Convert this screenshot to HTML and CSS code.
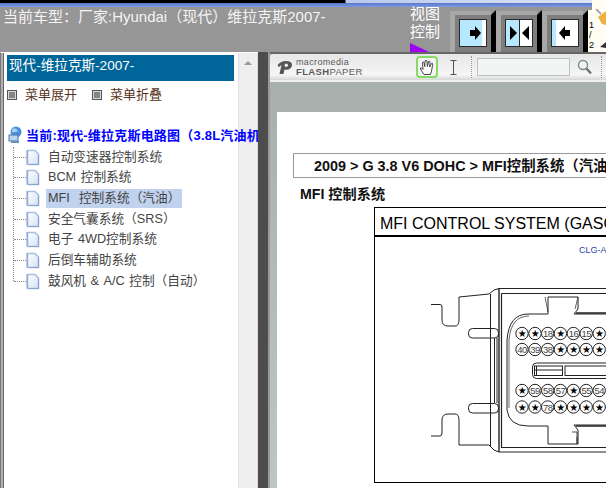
FILE: index.html
```html
<!DOCTYPE html>
<html>
    <head lang="zh">
        <meta name="viewport" content="width=device-width, initial-scale=1" />
        <title>维修手册</title>
        <link rel="stylesheet" href="styles.css">
    </head>
    <body>
        <svg class="defs" width="0" height="0">
            <defs>
                <linearGradient id="docfill" x1="0" y1="0" x2="1" y2="1">
                    <stop offset="0" stop-color="#ffffff"/>
                    <stop offset="1" stop-color="#d4e2f6"/>
                </linearGradient>
            </defs>
            <symbol id="doc" viewBox="0 0 14 17">
                <path d="M1.5 1.5 H9 L12.5 5 V15.5 H1.5 Z" fill="url(#docfill)" stroke="#a8bee4" stroke-width="1.6" stroke-linejoin="round"/>
                <path d="M1 1 V15.5" stroke="#7d96c4" stroke-width="0.8"/>
                <path d="M3 15.5 H12.5 V6" fill="none" stroke="#8aa2cc" stroke-width="1"/>
            </symbol>
            <symbol id="square" viewBox="0 0 10 10">
                <rect x="0.5" y="0.5" width="9" height="9" fill="#d8d8d8" stroke="#555"/>
                <path d="M2 3 H8 M2 5 H8 M2 7 H8" stroke="#333"/>
            </symbol>
        </svg>

        <header class="top">
            <div class="strip"></div>
            <div class="blue-strip"></div>
            <div class="top-row">
                <div class="car-title">当前车型：厂家:Hyundai（现代）维拉克斯2007-</div>
                <div class="view-label">
                    视图<br>控制
                    <span class="view-mark"></span>
                </div>
                <div class="view-buttons">
                    <svg class="view-btn" width="46" height="42" viewBox="0 0 46 42">
                        <rect x="0" y="1" width="41" height="41" fill="#a8a8a8"/>
                        <rect x="5" y="5" width="36" height="37" fill="#7e7e7e"/>
                        <polygon points="41,5 46,0 46,42 41,42" fill="#000"/>
                        <rect x="9.5" y="9.5" width="27" height="27" fill="#b8e8ff" stroke="#2a2a2a"/>
                        <rect x="32" y="10" width="4" height="26" fill="#fff"/>
                        <polygon points="20,20 25,20 25,16 31,23 25,30 25,26 20,26" fill="#000"/>
                    </svg>
                    <svg class="view-btn" width="46" height="42" viewBox="0 0 46 42">
                        <rect x="0" y="1" width="41" height="41" fill="#a8a8a8"/>
                        <rect x="5" y="5" width="36" height="37" fill="#7e7e7e"/>
                        <polygon points="41,5 46,0 46,42 41,42" fill="#000"/>
                        <rect x="9.5" y="9.5" width="27" height="27" fill="#fff" stroke="#2a2a2a"/>
                        <rect x="10" y="10" width="13" height="26" fill="#b8e8ff"/>
                        <path d="M23.5 10 V36" stroke="#2a2a2a"/>
                        <polygon points="14,16 21,23 14,30" fill="#000"/>
                        <polygon points="33,16 26,23 33,30" fill="#000"/>
                    </svg>
                    <svg class="view-btn" width="50" height="42" viewBox="0 0 50 42">
                        <rect x="0" y="1" width="41" height="41" fill="#a8a8a8"/>
                        <rect x="5" y="5" width="36" height="37" fill="#7e7e7e"/>
                        <polygon points="41,5 46,0 46,42 41,42" fill="#000"/>
                        <rect x="46" y="0" width="4" height="42" fill="#fffdf0"/>
                        <rect x="9.5" y="9.5" width="27" height="27" fill="#fff" stroke="#2a2a2a"/>
                        <rect x="10" y="10" width="4" height="26" fill="#b8e8ff"/>
                        <polygon points="28,20 23,20 23,16 17,23 23,30 23,26 28,26" fill="#000"/>
                    </svg>
                </div>
            </div>
            <div class="corner">
                <span class="corner-num">1<br>/<br>2</span>
                <svg width="14" height="42" viewBox="0 0 14 42">
                    <polygon points="6,8 14,2 14,16 10,15" fill="#f0b040"/>
                    <path d="M4 0 L9 5" stroke="#a8a8a8" stroke-width="2"/>
                    <polygon points="8,38 14,33 14,39" fill="#333"/>
                </svg>
            </div>
        </header>

        <main class="main">
            <section class="side">
                <div class="side-content">
                    <div class="side-title">现代-维拉克斯-2007-</div>
                    <div class="menu-actions">
                        <span class="menu-action"><svg width="10" height="10"><use href="#square"/></svg>菜单展开</span>
                        <span class="menu-action"><svg width="10" height="10"><use href="#square"/></svg>菜单折叠</span>
                    </div>
                    <div class="tree-root">
                        <svg width="14" height="18" viewBox="0 0 14 18">
                            <circle cx="8" cy="6" r="5.5" fill="#4a90d8"/>
                            <path d="M4 3 Q8 1 10 5 Q7 7 4 6 Z" fill="#9fd0f4"/>
                            <rect x="1" y="9" width="9" height="6" fill="#bcd4ec" stroke="#4878b0"/>
                            <rect x="3" y="15" width="8" height="2" fill="#6a90b8"/>
                        </svg>
                        <span>当前:现代-维拉克斯电路图（3.8L汽油机</span>
                    </div>
                    <ul class="tree">
                        <li class="tree-item"><svg width="14" height="17"><use href="#doc"/></svg><span class="tree-text">自动变速器控制系统</span></li>
                        <li class="tree-item"><svg width="14" height="17"><use href="#doc"/></svg><span class="tree-text">BCM 控制系统</span></li>
                        <li class="tree-item"><svg width="14" height="17"><use href="#doc"/></svg><span class="tree-text selected">MFI&nbsp; 控制系统（汽油）</span></li>
                        <li class="tree-item"><svg width="14" height="17"><use href="#doc"/></svg><span class="tree-text">安全气囊系统（SRS）</span></li>
                        <li class="tree-item"><svg width="14" height="17"><use href="#doc"/></svg><span class="tree-text">电子 4WD控制系统</span></li>
                        <li class="tree-item"><svg width="14" height="17"><use href="#doc"/></svg><span class="tree-text">后倒车辅助系统</span></li>
                        <li class="tree-item"><svg width="14" height="17"><use href="#doc"/></svg><span class="tree-text">鼓风机 &amp; A/C 控制（自动）</span></li>
                    </ul>
                </div>
                <div class="side-scroll"><span class="scroll-arrow"></span></div>
            </section>

            <div class="splitter"></div>

            <section class="viewer">
                <div class="toolbar">
                    <svg class="fp-logo" width="16" height="16" viewBox="0 0 16 16">
                        <path d="M0.5 6.5 Q3 2 9 2 Q15.5 2 15 6.5 Q14 11.5 7.5 10.5 L6.5 15 H2.5 L4.5 6 L2 8 Z" fill="#555"/>
                        <circle cx="9.3" cy="6.3" r="1.7" fill="#eee"/>
                    </svg>
                    <div class="fp-name">
                        <div class="fp-macro">macromedia</div>
                        <div class="fp-flash"><b>FLASH</b>PAPER</div>
                    </div>
                    <div class="hand-btn">
                        <svg width="16" height="17" viewBox="0 0 16 17">
                            <path d="M5 15.5 L1.5 10 Q1 8.5 2.5 9 L4 10.5 L3.5 3.5 Q4 2 5 3.5 L5.8 7.5 L6 2 Q7 0.5 8 2 L8.4 7.5 L9.5 2.5 Q10.5 1.5 11 3 L10.7 8 L12.5 4.5 Q14 4 13.7 5.5 L12.5 12 L11.5 15.5 Z" fill="#fff" stroke="#333" stroke-width="0.9" stroke-linejoin="round"/>
                        </svg>
                    </div>
                    <svg class="ibeam" width="7" height="15" viewBox="0 0 7 15">
                        <path d="M0.5 0.5 H6.5 M3.5 0.5 V14.5 M0.5 14.5 H6.5" stroke="#555" fill="none"/>
                    </svg>
                    <span class="tool-sep"></span>
                    <div class="search-box"></div>
                    <svg class="lens" width="15" height="16" viewBox="0 0 15 16">
                        <circle cx="6" cy="6" r="4.5" fill="#f0f4f4" stroke="#7d8a8a" stroke-width="1.4"/>
                        <path d="M9.5 9.5 L14 14.5" stroke="#6a7676" stroke-width="2.4"/>
                    </svg>
                    <span class="tool-sep last"></span>
                </div>

                <div class="page">
                    <div class="crumb">2009 &gt; G 3.8 V6 DOHC &gt; MFI控制系统（汽油）</div>
                    <h4 class="page-title">MFI 控制系统</h4>
                    <div class="figure">
                        <div class="figure-title">MFI CONTROL SYSTEM (GASOLINE)</div>
                        <svg class="wiring" width="232" height="246" viewBox="374 237 232 246">
                            <g fill="none" stroke="#222" stroke-width="1">
                                <path d="M430 304.5 H439 Q441 304.5 441 307 V320 Q441 326 447 326 H454 Q458 326 458 320 V297 L488 294 L493 290 L498 288.5 H606"/>
                                <path d="M430 436 H439 Q441 436 441 433 V420 Q441 414 447 414 H454 Q458 414 458 420 V445 L488 445 L493 450 L498 452 H606"/>
                                <path d="M498 288.5 V452" stroke-width="1.4"/>
                                <path d="M500.5 293.5 V447.5 H606 M500.5 293.5 H606" stroke-width="1.2"/>
                                <path d="M489.5 294 V446 M493.5 338 V403 M496 338 V403"/>
                                <rect x="467.5" y="328.5" width="30" height="9.5" rx="4"/>
                                <rect x="467.5" y="403.5" width="30" height="9.5" rx="4"/>
                                <path d="M506 340 V410 Q508 426 527 426 H547 V444 H577 V430 L573 425 H606"/>
                                <path d="M506 340 Q508 314 527 314 H547 V297 H577 V309 L573 314 H606"/>
                                <path d="M574 309 L577 297 M544 297 L547 312" stroke-width="0.7"/>
                                <path d="M508 340 V408 M508 340 Q510 316 528 316" stroke-width="0.7"/>
                                <path d="M575 313 H606 M575 426 H606" stroke-width="1.6"/>
                                <rect x="531.5" y="363" width="90" height="15.5" rx="4"/>
                                <rect x="533.5" y="366" width="28" height="9.5"/>
                                <rect x="564" y="366" width="60" height="9.5"/>
                                <path d="M535.5 366 V375.5 M534 370 H561"/>
                                <path d="M576 437 V444 M571 432 H576 V444" stroke-width="0.8"/>
                            </g>
                            <g class="pins">
                                <g transform="translate(521 333.5)"><circle r="6.2"/><text class="star">★</text></g>
                                <g transform="translate(534 333.5)"><circle r="6.2"/><text class="star">★</text></g>
                                <g transform="translate(546.7 333.5)"><circle r="6.2"/><text>18</text></g>
                                <g transform="translate(559.4 333.5)"><circle r="6.2"/><text class="star">★</text></g>
                                <g transform="translate(572.4 333.5)"><circle r="6.2"/><text>16</text></g>
                                <g transform="translate(585.2 333.5)"><circle r="6.2"/><text>15</text></g>
                                <g transform="translate(598.2 333.5)"><circle r="6.2"/><text class="star">★</text></g>

                                <g transform="translate(521 349.5)"><circle r="6.2"/><text>40</text></g>
                                <g transform="translate(534 349.5)"><circle r="6.2"/><text>39</text></g>
                                <g transform="translate(546.7 349.5)"><circle r="6.2"/><text>38</text></g>
                                <g transform="translate(559.4 349.5)"><circle r="6.2"/><text class="star">★</text></g>
                                <g transform="translate(572.4 349.5)"><circle r="6.2"/><text class="star">★</text></g>
                                <g transform="translate(585.2 349.5)"><circle r="6.2"/><text class="star">★</text></g>
                                <g transform="translate(598.2 349.5)"><circle r="6.2"/><text class="star">★</text></g>

                                <g transform="translate(521 390.5)"><circle r="6.2"/><text class="star">★</text></g>
                                <g transform="translate(534 390.5)"><circle r="6.2"/><text>59</text></g>
                                <g transform="translate(546.7 390.5)"><circle r="6.2"/><text>58</text></g>
                                <g transform="translate(559.4 390.5)"><circle r="6.2"/><text>57</text></g>
                                <g transform="translate(572.4 390.5)"><circle r="6.2"/><text class="star">★</text></g>
                                <g transform="translate(585.2 390.5)"><circle r="6.2"/><text>55</text></g>
                                <g transform="translate(598.2 390.5)"><circle r="6.2"/><text>54</text></g>

                                <g transform="translate(521 407)"><circle r="6.2"/><text class="star">★</text></g>
                                <g transform="translate(534 407)"><circle r="6.2"/><text class="star">★</text></g>
                                <g transform="translate(546.7 407)"><circle r="6.2"/><text>78</text></g>
                                <g transform="translate(559.4 407)"><circle r="6.2"/><text class="star">★</text></g>
                                <g transform="translate(572.4 407)"><circle r="6.2"/><text class="star">★</text></g>
                                <g transform="translate(585.2 407)"><circle r="6.2"/><text class="star">★</text></g>
                                <g transform="translate(598.2 407)"><circle r="6.2"/><text class="star">★</text></g>
                            </g>
                            <text class="clg" x="578" y="253">CLG-A</text>
                        </svg>
                    </div>
                </div>
            </section>
        </main>
    </body>
</html>
```

FILE: styles.css
```css
* {
    box-sizing: border-box;
}

html,
body {
    margin: 0;
    height: 100%;
    overflow: hidden;
}

body {
    width: 606px;
    height: 488px;
    background-color: #969696;
    font-family: "Liberation Sans", "Noto Sans CJK SC", sans-serif;
    display: flex;
    flex-direction: column;
}

.defs {
    position: absolute;
}

/* top bar */

.top {
    position: relative;
    height: 52px;
    flex: none;
}

.strip {
    height: 3px;
    background: linear-gradient(90deg, #000 0, #000 345px, #b8c8ee 346px, #dfe6f8 100%);
}

.blue-strip {
    height: 4px;
    background: linear-gradient(#5a78c8, #7f9ae0);
}

.top-row {
    display: flex;
    height: 45px;
}

.car-title {
    flex: none;
    width: 407px;
    padding: 1px 0 0 3px;
    font-size: 15px;
    line-height: 18px;
    color: #f4f4f4;
    white-space: nowrap;
}

.view-label {
    position: relative;
    flex: none;
    width: 43px;
    margin-top: -2px;
    padding-left: 3px;
    font-size: 15px;
    line-height: 18px;
    color: #fff;
}

.view-mark {
    position: absolute;
    left: 3px;
    bottom: 0;
    width: 19px;
    height: 9px;
    background-color: #a000f0;
    clip-path: polygon(0 0, 100% 100%, 0 100%);
}

.view-buttons {
    display: flex;
    align-items: flex-end;
    flex: none;
}

.view-btn {
    display: block;
    flex: none;
}

.corner {
    position: absolute;
    right: 0;
    top: 0;
    width: 14px;
    height: 52px;
    background-color: #fffdf4;
    padding-top: 9px;
}

.corner svg {
    display: block;
}

.corner-num {
    position: absolute;
    left: -3px;
    top: 20px;
    font-size: 9px;
    line-height: 10px;
    color: #000;
}

/* main area */

.main {
    display: flex;
    flex: 1;
    min-height: 0;
}

.side {
    display: flex;
    flex: none;
    width: 258px;
    overflow: hidden;
    border-left: 1px solid #777;
    border-top: 1px solid #fff;
    background-color: #fff;
    box-shadow: inset 2px 0 0 #b0b0b0, inset 3px 0 0 #666;
}

.side-content {
    flex: none;
    width: 237px;
    padding: 2px 0 0 6px;
    font-size: 13px;
    color: #444;
}

.side-title {
    width: 227px;
    height: 26px;
    padding: 2px 0 0 2px;
    background-color: #006699;
    color: #fff;
    font-size: 13.6px;
    line-height: 18px;
    white-space: nowrap;
}

.menu-actions {
    display: flex;
    margin-top: 5px;
    height: 18px;
    align-items: center;
}

.menu-action {
    display: flex;
    align-items: center;
    gap: 8px;
    width: 85px;
    color: #553322;
    line-height: 18px;
}

.tree-root {
    display: flex;
    align-items: center;
    gap: 4px;
    margin-top: 20px;
    padding-left: 1px;
    height: 21px;
    color: #0000ff;
    font-weight: bold;
    letter-spacing: 0.2px;
    white-space: nowrap;
    position: relative;
    z-index: 1;
}

.tree-root svg {
    flex: none;
}

.tree {
    list-style: none;
    margin: 2px 0 0 6px;
    padding: 0;
    height: 134px;
    border-left: 1px dotted #888;
}

.tree-item {
    display: flex;
    align-items: center;
    height: 20.67px;
    white-space: nowrap;
}

.tree-item::before {
    content: "";
    width: 12px;
    border-top: 1px dotted #888;
    flex: none;
}

.tree-item svg {
    flex: none;
}

.tree-text {
    margin-left: 6px;
    padding: 1px 2px;
    font-size: 12.7px;
    line-height: 17px;
    word-spacing: 1px;
}

.selected {
    background-color: #c0d2ee;
}

.side-scroll {
    flex: none;
    width: 20px;
    background-color: #eeeeee;
    border-left: 1px solid #e2e2e2;
    border-right: 1px solid #dcdcdc;
    padding-top: 8px;
}

.scroll-arrow {
    display: block;
    width: 0;
    margin: 0 auto;
    border-left: 4px solid transparent;
    border-right: 4px solid transparent;
    border-bottom: 4px solid #999;
}

.splitter {
    flex: none;
    width: 12px;
    background-color: #4d4d4d;
    border-right: 2px solid #9a9a9a;
}

/* flashpaper viewer */

.viewer {
    flex: 1;
    min-width: 0;
    background: linear-gradient(#a6aeac, #bcc7c5);
    overflow: hidden;
    border-top: 2px solid #666;
}

.toolbar {
    display: flex;
    align-items: center;
    height: 28px;
    padding-left: 7px;
    background: linear-gradient(#e6e6e6, #f6f6f6 80%, #d6d6d6);
    border-bottom: 2px solid #eee;
    border-radius: 3px 0 0 0;
}

.fp-logo {
    flex: none;
    margin-right: 3px;
}

.fp-name {
    flex: none;
    width: 120px;
    color: #5a5a5a;
    font-size: 9px;
    line-height: 9px;
}

.fp-macro {
    letter-spacing: 0.35px;
}

.fp-flash {
    font-size: 9.5px;
    letter-spacing: 0.35px;
}

.hand-btn {
    display: flex;
    align-items: center;
    justify-content: center;
    flex: none;
    width: 22px;
    height: 22px;
    border: 2px solid #84dc64;
    border-radius: 4px;
    background-color: #f4f4f4;
}

.ibeam {
    flex: none;
    margin-left: 12px;
}

.tool-sep {
    flex: none;
    height: 22px;
    margin-left: 14px;
    border-left: 1px dotted #999;
}

.search-box {
    flex: none;
    width: 93px;
    height: 18px;
    margin-left: 5px;
    background-color: #f3f5f4;
    border: 1.5px solid #b8c4c0;
}

.lens {
    flex: none;
    margin-left: 7px;
}

.tool-sep.last {
    margin-left: 9px;
}

.page {
    margin: 30px 0 0 7px;
    height: 380px;
    width: 340px;
    padding: 41px 0 0 16px;
    background-color: #fff;
    color: #000;
}

.crumb {
    height: 25px;
    padding-left: 20px;
    border: 1px solid #999;
    font-size: 14.4px;
    font-weight: bold;
    line-height: 24px;
    white-space: nowrap;
    color: #111;
}

.page-title {
    margin: 7px 0 0 7px;
    font-size: 14.2px;
    line-height: 18px;
    font-weight: bold;
    color: #111;
}

.figure {
    width: 300px;
    height: 276px;
    margin: 4px 0 0 81px;
    border: 1px solid #000;
    border-width: 1px 0 1px 1.5px;
}

.figure-title {
    height: 29px;
    padding: 3px 0 0 5px;
    border-bottom: 2px solid #000;
    font-size: 16px;
    line-height: 26px;
    white-space: nowrap;
    overflow: hidden;
}

.wiring {
    display: block;
}

.pins circle {
    fill: #fff;
    stroke: #222;
    stroke-width: 1;
}

.pins text {
    font-size: 9.5px;
    letter-spacing: -0.6px;
    text-anchor: middle;
    dominant-baseline: central;
    fill: #444;
}

.pins .star {
    font-family: "DejaVu Sans", sans-serif;
    font-size: 10px;
    fill: #000;
}

.clg {
    font-size: 9px;
    fill: #2a3fa8;
}
```
